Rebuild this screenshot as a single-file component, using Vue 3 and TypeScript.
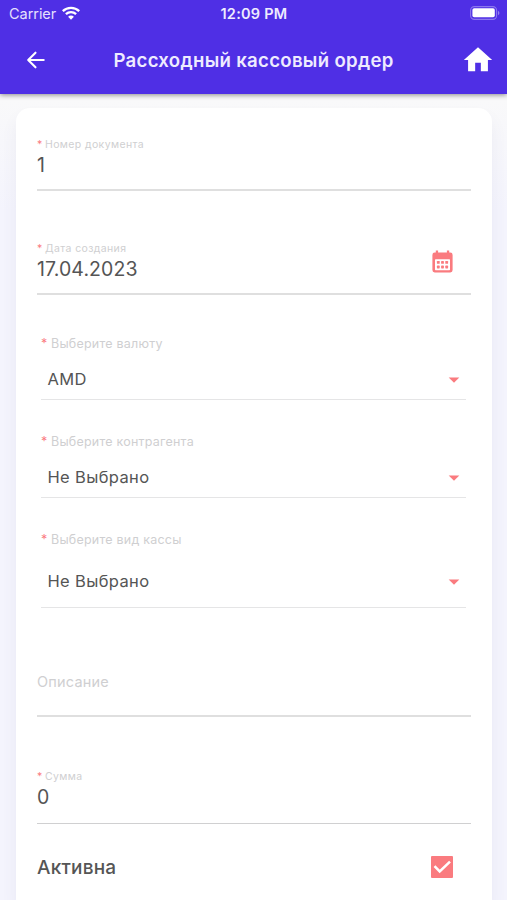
<script setup lang="ts">
interface Field {
  id: string
  kind: 'input' | 'date' | 'select' | 'placeholder'
  label: string
  value?: string
}

const fields: Field[] = [
  { id: 'number', kind: 'input', label: 'Номер документа', value: '1' },
  { id: 'date', kind: 'date', label: 'Дата создания', value: '17.04.2023' },
  { id: 'currency', kind: 'select', label: 'Выберите валюту', value: 'AMD' },
  { id: 'partner', kind: 'select', label: 'Выберите контрагента', value: 'Не Выбрано' },
  { id: 'cashbox', kind: 'select', label: 'Выберите вид кассы', value: 'Не Выбрано' },
  { id: 'note', kind: 'placeholder', label: 'Описание' },
  { id: 'amount', kind: 'input', label: 'Сумма', value: '0' },
]
</script>

<template>
  <div class="screen">
    <header class="header">
      <div class="status">
        <div class="carrier">
          <span>Carrier</span>
          <svg class="wifi" viewBox="0 0 18 14" width="18" height="14">
            <g fill="none" stroke="#fff" stroke-width="2.3">
              <path d="M.8 5.100C5.300.7 12.700.7 17.200 5.100" />
              <path d="M3.900 8.200c2.900-2.800 7.300-2.800 10.200 0" />
            </g>
            <path d="M9 13.700 6.100 10.800c1.600-1.600 4.200-1.600 5.800 0z" fill="#fff" />
          </svg>
        </div>
        <span class="clock">12:09 PM</span>
        <svg class="battery" viewBox="0 0 30 14" width="30" height="14">
          <rect x=".6" y=".6" width="26" height="12.800" rx="3.800" fill="none" stroke="#fff" stroke-opacity=".35" stroke-width="1.100" />
          <rect x="2.400" y="2.300" width="22.400" height="9" rx="1.800" fill="#fff" />
          <path d="M28 4.800c1.900.8 1.900 3.600 0 4.400z" fill="#fff" fill-opacity=".4" />
        </svg>
      </div>
      <div class="toolbar">
        <svg class="back" viewBox="0 0 26 26" width="26" height="26">
          <path d="M20.700 13H5.800M12.500 5.700 5.200 13l7.300 7.300" fill="none" stroke="#fff" stroke-width="2.100" stroke-linecap="round" stroke-linejoin="round" />
        </svg>
        <h1 class="title">Рассходный кассовый ордер</h1>
        <svg class="home" viewBox="0 0 24 24" width="34" height="34">
          <path d="M10 20v-6h4v6h5v-8h3L12 3 2 12h3v8z" fill="#fff" />
        </svg>
      </div>
    </header>

    <main class="card">
      <div v-for="f in fields" :key="f.id" class="field" :class="[f.kind, f.id]">
        <div class="label"><i v-if="f.kind !== 'placeholder'" class="star">*</i>{{ f.label }}</div>
        <div v-if="f.value" class="value">
          <span>{{ f.value }}</span>
          <svg v-if="f.kind === 'date'" class="calendar" viewBox="0 0 21 23" width="21" height="23">
            <path d="M3.800.6h2.300v2h8.800v-2h2.300v2h1.100a2.300 2.300 0 0 1 2.300 2.300v15.200a2.300 2.300 0 0 1-2.300 2.300H2.700A2.300 2.300 0 0 1 .4 20.100V4.900a2.300 2.300 0 0 1 2.300-2.300h1.100z" fill="#fa7b7f" />
            <rect x="3" y="9.300" width="15" height="10.900" rx=".6" fill="#fff" />
            <g fill="#fa7b7f">
              <rect x="4.900" y="11" width="2.800" height="2.800" rx=".6" />
              <rect x="9.100" y="11" width="2.800" height="2.800" rx=".6" />
              <rect x="13.300" y="11" width="2.800" height="2.800" rx=".6" />
              <rect x="4.900" y="15.600" width="2.800" height="2.800" rx=".6" />
              <rect x="9.100" y="15.600" width="2.800" height="2.800" rx=".6" />
              <rect x="13.300" y="15.600" width="2.800" height="2.800" rx=".6" />
            </g>
          </svg>
          <svg v-if="f.kind === 'select'" class="caret" viewBox="0 0 12 6" width="12" height="6">
            <path d="M.7.4h10.600L6 5.700z" fill="#fa7b7f" />
          </svg>
        </div>
      </div>
      <div class="active">
        <span>Активна</span>
        <svg viewBox="0 0 22 22" width="22" height="22">
          <rect width="22" height="22" rx="1" fill="#fa7b7f" />
          <path d="m3.500 10.200 5.200 5.300L19 5.600" fill="none" stroke="#fff" stroke-width="2.500" />
        </svg>
      </div>
    </main>
  </div>
</template>

<style>
body {
  margin: 0;
  overflow: hidden;
}
</style>

<style scoped>
.screen {
  display: flex;
  flex-direction: column;
  height: 900px;
  overflow: hidden;
  background: linear-gradient(#f9f9fa 100px, #f4f4fd 210px);
  color: #555;
  font-family: Inter, 'Liberation Sans', sans-serif;
}
.header {
  flex: none;
  height: 94px;
  background: #4f2fe5;
  color: #fff;
  box-shadow: 0 1px 5px rgba(0, 0, 0, 0.45);
  z-index: 1;
}
.status {
  display: grid;
  grid-template-columns: 1fr auto 1fr;
  align-items: center;
  height: 27px;
  padding: 0 7px 0 9px;
  font-size: 14.5px;
}
.carrier {
  display: flex;
  align-items: center;
  gap: 6px;
  color: #e5e0fd;
}
.carrier span {
  letter-spacing: -0.05px;
}
.wifi {
  margin-top: -1px;
}
.clock {
  margin-left: -1px;
  font-size: 14.5px;
  font-weight: 600;
  letter-spacing: 0.25px;
  color: #eeebff;
}
.battery {
  justify-self: end;
  margin: -1px 0 0;
}
.toolbar {
  display: grid;
  grid-template-columns: 34px 1fr 34px;
  align-items: center;
  height: 66px;
  padding: 0 13px 0 23px;
}
.title {
  margin: 0 0 0 -10px;
  text-align: center;
  font-size: 18.6px;
  font-weight: 600;
  letter-spacing: 0.3px;
  color: #eeebff;
}
.home {
  margin-left: 1px;
}
.card {
  flex: 1;
  display: flex;
  flex-direction: column;
  margin: 14px 15px 0 16px;
  padding: 28px 21px 0;
  border-radius: 14px 14px 0 0;
  background: #fff;
  box-shadow: 0 10px 16px rgba(80, 80, 130, 0.07);
}
.field {
  flex: none;
  box-sizing: border-box;
  height: 55px;
  border-bottom: 2px solid #dfdfdf;
}
.label {
  height: 16px;
  line-height: 17px;
  font-size: 10.5px;
  letter-spacing: 0.38px;
  color: #cfcfd1;
  white-space: nowrap;
}
.star {
  display: inline-block;
  width: 8px;
  font-style: normal;
  color: #fa7b7f;
}
.value {
  display: flex;
  justify-content: space-between;
  height: 25px;
  line-height: 26px;
  font-size: 19.5px;
  letter-spacing: 0.1px;
}
.date {
  margin-top: 49px;
}
.calendar {
  margin: -6px 18px 0 0;
}
.select {
  height: 64px;
  margin: 41px 5px 0 4px;
  border-bottom: 1px solid #e5e5e6;
}
.select .label {
  line-height: 16px;
  font-size: 12.5px;
  letter-spacing: 0.22px;
}
.select .star {
  width: 10px;
}
.select .value {
  align-items: center;
  padding: 15px 6px 0 6.5px;
  line-height: 25px;
  font-size: 16.5px;
  letter-spacing: 0.35px;
}
.partner {
  margin-top: 34px;
}
.cashbox {
  height: 76px;
  margin-top: 34px;
}
.cashbox .value {
  padding-top: 21px;
}
.placeholder {
  height: 43px;
  margin-top: 66px;
}
.placeholder .label {
  font-size: 14.5px;
  line-height: 15px;
  letter-spacing: 0.2px;
}
.amount {
  height: 56px;
  margin-top: 51px;
  border-bottom: 1px solid #d0d0d1;
}
.amount .value {
  line-height: 27px;
}
.active {
  display: flex;
  align-items: center;
  justify-content: space-between;
  height: 22px;
  margin: 32px 18px 0 0;
  font-size: 19px;
  font-weight: 500;
  letter-spacing: 0.2px;
}
</style>
